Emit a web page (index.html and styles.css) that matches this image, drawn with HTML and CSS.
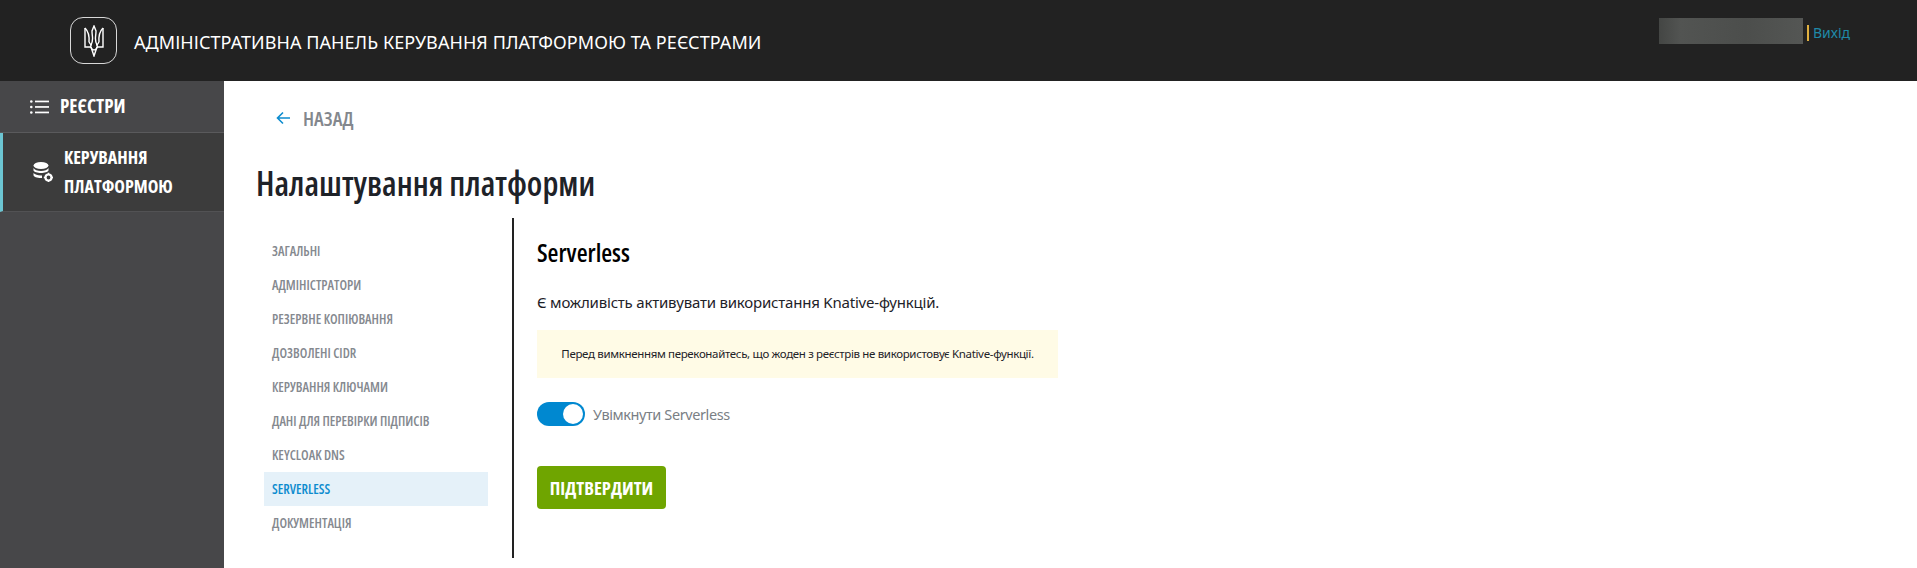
FILE: index.html
```html
<!DOCTYPE html>
<html lang="uk">
<head>
  <meta charset="UTF-8">
  <meta name="viewport" content="width=device-width, initial-scale=1.0">
  <title>Налаштування платформи</title>
  <link rel="stylesheet" href="styles.css">
</head>
<body>

  <div class="topbar">
    <div class="brand">
      <div class="logo">
        <svg width="20" height="32" viewBox="0 0 20 32" fill="none" stroke="#fff" stroke-width="1.4">
          <path d="M1 3c3 3 4.500 8 4 14M19 3c-3 3-4.500 8-4 14"/>
          <path d="M1 3v19h6M19 3v19h-6"/>
          <path d="M10 1L8 6c0 6 2 9-1 14-1 2 1 5 3 5s4-3 3-5c-3-5-1-8-1-14z"/>
          <path d="M5 17c1 2 2 3 3 3M15 17c-1 2-2 3-3 3"/>
          <path d="M7 22l3 9 3-9"/>
        </svg>
      </div>
      <span class="brand-title">АДМІНІСТРАТИВНА ПАНЕЛЬ КЕРУВАННЯ ПЛАТФОРМОЮ ТА РЕЄСТРАМИ</span>
    </div>
    <div class="user">
      <div class="user-name"></div>
      <a href="#" class="logout">Вихід</a>
    </div>
  </div>

  <div class="layout">
    <div class="sidebar">
      <a href="#" class="side-item">
        <svg width="19" height="14" viewBox="0 0 19 14" fill="#fff">
          <circle cx="1.300" cy="1.500" r="1.300"/>
          <circle cx="1.300" cy="7" r="1.300"/>
          <circle cx="1.300" cy="12.500" r="1.300"/>
          <rect x="5" y="0.600" width="14" height="1.700"/>
          <rect x="5" y="6.100" width="14" height="1.700"/>
          <rect x="5" y="11.600" width="14" height="1.700"/>
        </svg>
        <span>РЕЄСТРИ</span>
      </a>
      <a href="#" class="side-item active">
        <svg width="20" height="20" viewBox="0 0 20 20" fill="#fff">
          <ellipse cx="8" cy="3.500" rx="7.500" ry="3.500"/>
          <path d="M.5 6c1 2 4 3 7.500 3s6.500-1 7.500-3v2.500C15 10 11.500 11 8 11S1 10 .5 8.500z"/>
          <path d="M.5 11c1.500 1.500 4 2.500 7.500 2.500h1v2.500H8c-4 0-7.500-1-7.500-3z"/>
          <circle cx="15.500" cy="15.500" r="3" fill="none" stroke="#fff" stroke-width="2.200"/>
          <path d="M14.700 10.800h1.600v1.400h-1.600zM14.700 18.800h1.600v1.400h-1.600zM10.800 14.700h1.400v1.600h-1.400zM18.800 14.700h1.200v1.600h-1.200z"/>
        </svg>
        <span>КЕРУВАННЯ<br>ПЛАТФОРМОЮ</span>
      </a>
    </div>

    <div class="main-content">
      <a href="#" class="back-link">
        <svg width="14" height="14" viewBox="0 0 14 14" fill="none" stroke="#0d8ccf" stroke-width="1.600">
          <path d="M14 7H1.500M7 1.500L1.500 7 7 12.500"/>
        </svg>
        <span>НАЗАД</span>
      </a>
      <h1 class="page-title">Налаштування платформи</h1>

      <div class="settings">
        <ul class="settings-nav">
          <li><a href="#">ЗАГАЛЬНІ</a></li>
          <li><a href="#">АДМІНІСТРАТОРИ</a></li>
          <li><a href="#">РЕЗЕРВНЕ КОПІЮВАННЯ</a></li>
          <li><a href="#">ДОЗВОЛЕНІ CIDR</a></li>
          <li><a href="#">КЕРУВАННЯ КЛЮЧАМИ</a></li>
          <li><a href="#">ДАНІ ДЛЯ ПЕРЕВІРКИ ПІДПИСІВ</a></li>
          <li><a href="#">KEYCLOAK DNS</a></li>
          <li><a href="#" class="current">SERVERLESS</a></li>
          <li><a href="#">ДОКУМЕНТАЦІЯ</a></li>
        </ul>

        <div class="settings-body">
          <h2>Serverless</h2>
          <p class="description">Є можливість активувати використання Knative-функцій.</p>
          <div class="notice">Перед вимкненням переконайтесь, що жоден з реєстрів не використовує Knative-функції.</div>
          <div class="switch-row">
            <div class="switch"><span class="switch-knob"></span></div>
            <span class="switch-label">Увімкнути Serverless</span>
          </div>
          <button class="submit">ПІДТВЕРДИТИ</button>
        </div>
      </div>
    </div>
  </div>

</body>
</html>
```
FILE: styles.css
```css
/* Common styles */
body {
  margin: 0;
  height: 568px;
  overflow: hidden;
  font-family: "Open Sans", Arial, sans-serif;
  color: #1e2228;
}

a {
  text-decoration: none;
}

/* Top bar */
.topbar {
  height: 81px;
  background-color: #222;
  display: flex;
  justify-content: space-between;
  padding: 0 67px 0 70px;
}

.brand {
  display: flex;
  align-items: center;
  gap: 17px;
}

.logo {
  width: 45px;
  height: 45px;
  border: 1px solid #d8d8d8;
  border-radius: 13px;
  display: flex;
  align-items: center;
  justify-content: center;
}

.brand-title {
  padding-top: 2px;
  color: #fff;
  font-family: "Noto Sans", sans-serif;
  font-size: 18px;
  letter-spacing: 0.07px;
}

.user {
  display: flex;
  align-items: flex-start;
  padding-top: 18px;
}

.user-name {
  width: 144px;
  height: 26px;
  background: linear-gradient(90deg, #444644, #525452 15%, #4c4e4c 60%, #545654);
}

.logout {
  margin: 7px 0 0 4px;
  padding-left: 4px;
  border-left: 2px solid #e0b040;
  height: 16px;
  line-height: 16px;
  font-family: "Noto Sans", sans-serif;
  font-size: 14px;
  color: #1f8aa8;
}

/* Layout */
.layout {
  display: flex;
  height: 487px;
}

.sidebar {
  width: 224px;
  flex-shrink: 0;
  background-color: #474749;
}

.side-item {
  display: flex;
  align-items: center;
  height: 51px;
  padding-left: 30px;
  gap: 11px;
  color: #fff;
  font-stretch: 75%;
  font-weight: 700;
  font-size: 19px;
  line-height: 29px;
  border-bottom: 1px solid #5a5a5c;
}

.side-item.active {
  height: 78px;
  background-color: #3c3c3c;
  border-left: 3px solid #6cc5d2;
  border-bottom-color: #525254;
  font-size: 18px;
}

/* Main content */
.main-content {
  flex: 1;
  padding: 0 33px 0 32px;
}

.back-link {
  display: flex;
  align-items: center;
  gap: 13px;
  margin: 25px 0 0 20px;
  height: 24px;
  color: #83878d;
  font-stretch: 75%;
  font-weight: 600;
  font-size: 20px;
}

.page-title {
  margin: 29px 0 0;
  height: 48px;
  line-height: 48px;
  font-stretch: 75%;
  font-size: 33.400px;
  font-weight: 600;
  color: #1e2228;
}

/* Settings */
.settings {
  display: flex;
  margin-top: 11px;
  height: 340px;
}

.settings-nav {
  list-style: none;
  margin: 0;
  padding: 16px 0 0 8px;
  width: 258px;
  box-sizing: border-box;
  border-right: 2px solid #222;
  flex-shrink: 0;
}

.settings-nav a {
  display: block;
  width: 224px;
  height: 34px;
  line-height: 34px;
  padding-left: 8px;
  box-sizing: border-box;
  color: #85898f;
  font-stretch: 75%;
  font-weight: 600;
  font-size: 13.400px;
}

.settings-nav a.current {
  background-color: #e5f1f9;
  color: #0d8ccf;
}

.settings-body {
  padding-left: 23px;
}

.settings-body h2 {
  margin: 18px 0 0;
  height: 32px;
  line-height: 32px;
  font-stretch: 75%;
  font-size: 25px;
  font-weight: 600;
  color: #000;
}

.description {
  margin: 22px 0 0;
  height: 24px;
  line-height: 24px;
  font-family: "Noto Sans", sans-serif;
  font-size: 15px;
  letter-spacing: -0.2px;
}

.notice {
  margin-top: 16px;
  width: 521px;
  height: 48px;
  line-height: 48px;
  background-color: #fffbe6;
  text-align: center;
  font-family: "Noto Sans", sans-serif;
  font-size: 11.500px;
  letter-spacing: -0.34px;
}

.switch-row {
  display: flex;
  align-items: center;
  gap: 8px;
  margin-top: 24px;
}

.switch {
  width: 48px;
  height: 24px;
  border-radius: 12px;
  background-color: #0088d0;
  display: flex;
  justify-content: flex-end;
  align-items: center;
  padding-right: 2px;
  box-sizing: border-box;
}

.switch-knob {
  width: 20px;
  height: 20px;
  border-radius: 50%;
  background-color: #fff;
}

.switch-label {
  font-family: "Noto Sans", sans-serif;
  font-size: 14.500px;
  letter-spacing: -0.4px;
  color: #7a7f85;
}

.submit {
  display: block;
  margin-top: 40px;
  width: 129px;
  height: 43px;
  border: none;
  border-radius: 4px;
  background-color: #6fa500;
  color: #fff;
  font-family: "Open Sans", sans-serif;
  font-stretch: 75%;
  font-weight: 700;
  font-size: 18.500px;
  cursor: pointer;
}
```
